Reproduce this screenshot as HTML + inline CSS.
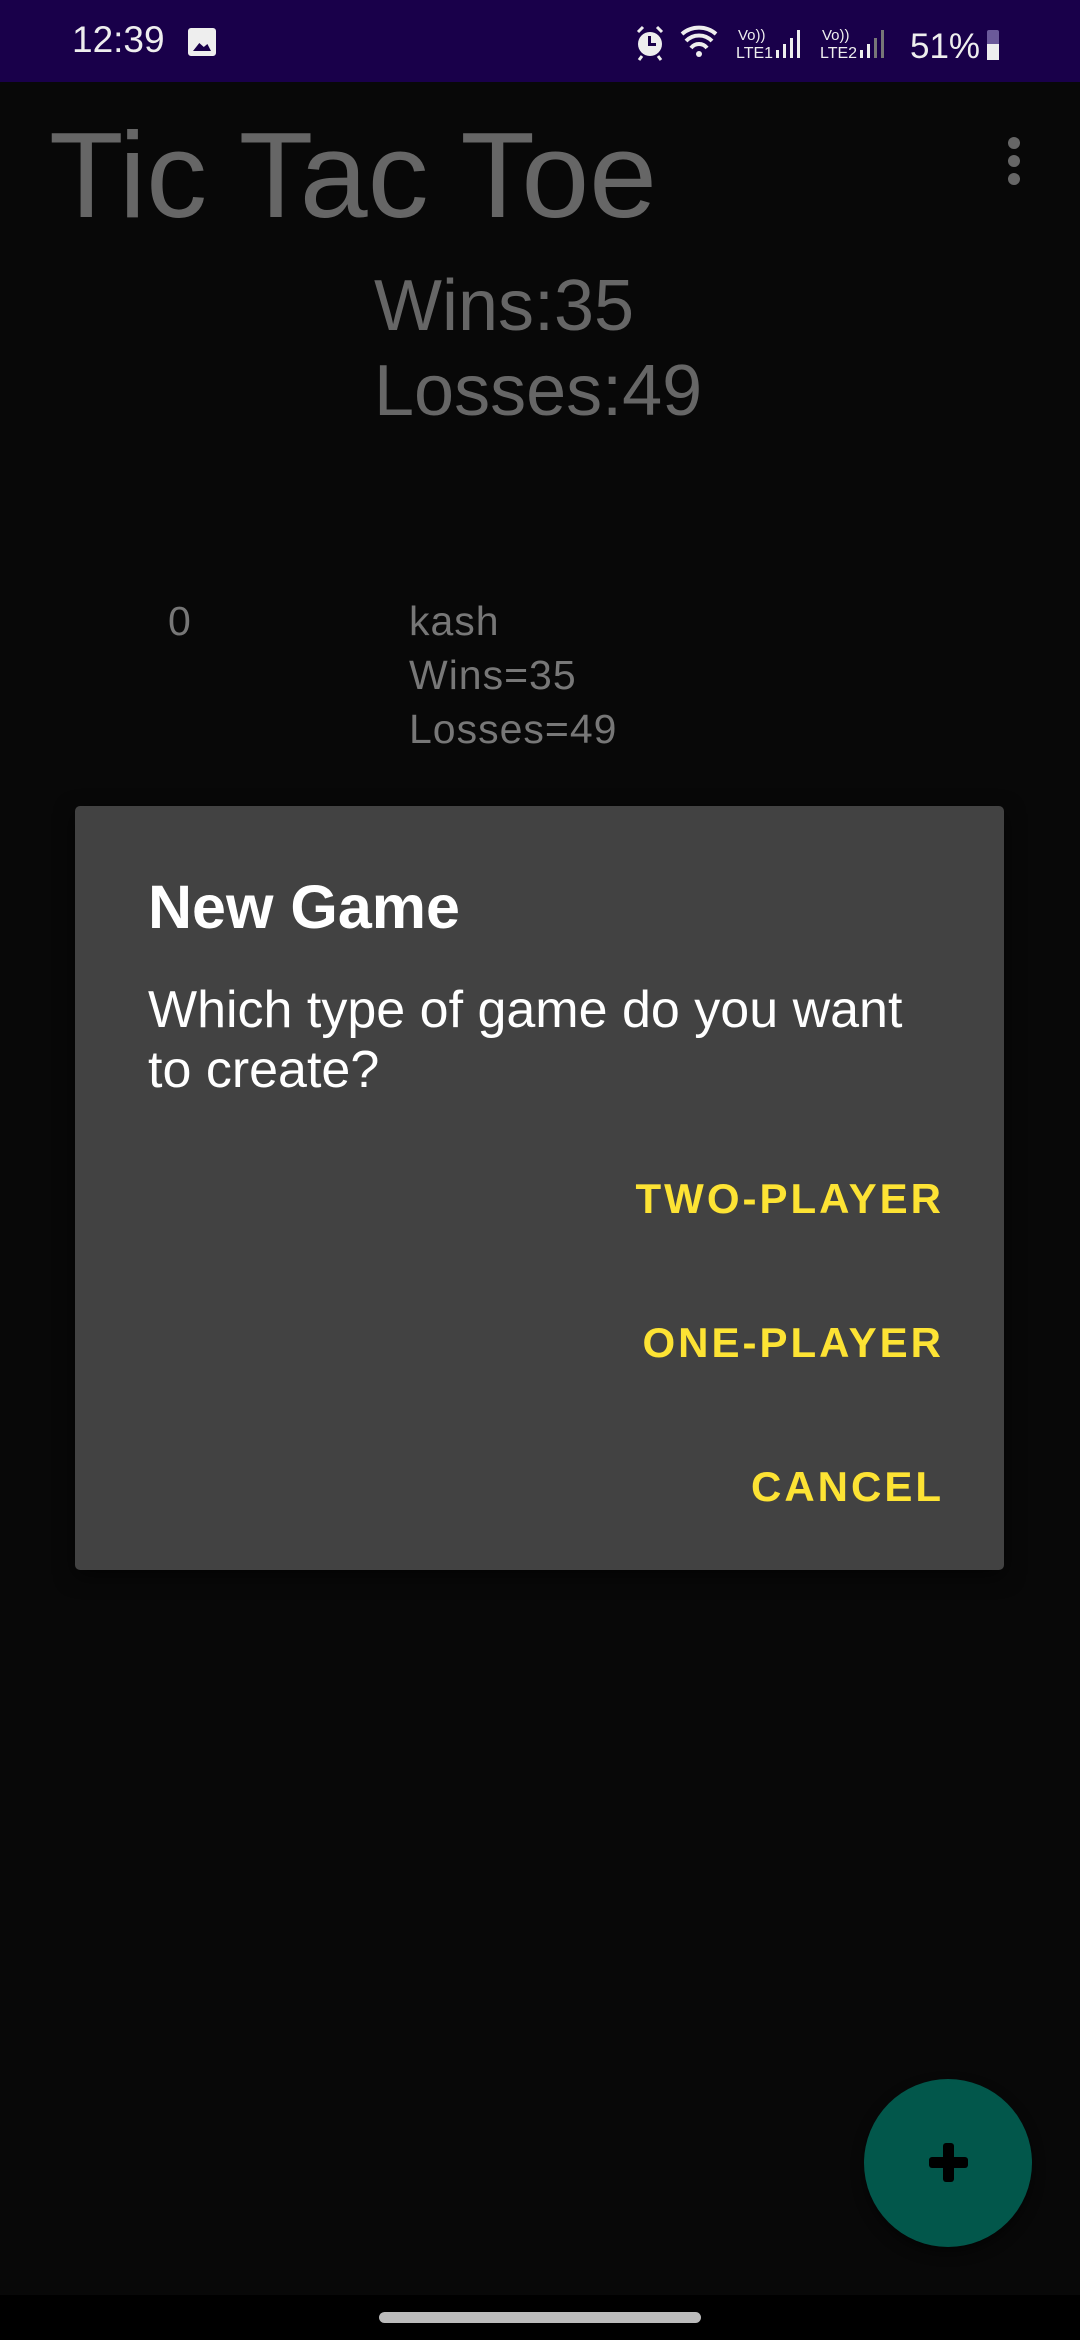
<!DOCTYPE html>
<html><head><meta charset="utf-8"><style>
*{margin:0;padding:0;box-sizing:border-box}
body{width:1080px;height:2340px;background:#080808;position:relative;overflow:hidden;font-family:"Liberation Sans",sans-serif}
.a{position:absolute;white-space:nowrap}
</style></head><body>
<div class="a" style="left:0;top:0;width:1080px;height:82px;background:#19004a"></div>
<div class="a" style="left:72px;top:18px;font-size:37px;color:#eee;line-height:44px">12:39</div>
<div class="a" style="left:188px;top:28px;width:28px;height:28px;border:3px solid #eee;border-radius:3px;background:#eee"><div style="position:absolute;left:2px;top:10px;width:18px;height:10px;background:#19004a;clip-path:polygon(0 100%,35% 20%,60% 60%,80% 30%,100% 100%)"></div></div>
<svg class="a" style="left:630px;top:20px" width="420" height="44" viewBox="0 0 420 44">
<circle cx="20" cy="24" r="12" fill="#eee"/><path d="M8 12l5-5M32 12l-5-5M12 36l-3 4M28 36l3 4" stroke="#eee" stroke-width="3"/><rect x="18" y="16" width="3" height="9" fill="#19004a"/><rect x="18" y="23" width="8" height="3" fill="#19004a"/>
<path d="M52 14a26 26 0 0 1 34 0M56 21a18 18 0 0 1 26 0M61 28a10 10 0 0 1 16 0" stroke="#eee" stroke-width="4" fill="none"/><circle cx="69" cy="34" r="3" fill="#eee"/>
<text x="108" y="20" font-size="15" fill="#eee" font-family="Liberation Sans">Vo))</text><text x="106" y="38" font-size="16" fill="#eee" font-family="Liberation Sans">LTE1</text>
<rect x="146" y="30" width="3" height="8" fill="#eee"/><rect x="153" y="24" width="3" height="14" fill="#eee"/><rect x="160" y="18" width="3" height="20" fill="#eee"/><rect x="167" y="10" width="3" height="28" fill="#eee"/>
<text x="192" y="20" font-size="15" fill="#eee" font-family="Liberation Sans">Vo))</text><text x="190" y="38" font-size="16" fill="#eee" font-family="Liberation Sans">LTE2</text>
<rect x="230" y="30" width="3" height="8" fill="#eee"/><rect x="237" y="24" width="3" height="14" fill="#eee"/><rect x="244" y="18" width="3" height="20" fill="#777"/><rect x="251" y="10" width="3" height="28" fill="#777"/>
<text x="280" y="38" font-size="35" fill="#eee" font-family="Liberation Sans">51%</text>
<rect x="357" y="10" width="12" height="30" rx="2" fill="#6b5a9a"/><rect x="357" y="24" width="12" height="16" fill="#eee"/>
</svg>
<div class="a" style="left:49px;top:110px;font-size:122px;color:#666;line-height:130px">Tic Tac Toe</div>
<div class="a" style="left:1008px;top:137px;width:12px;height:12px;border-radius:6px;background:#666;box-shadow:0 18px 0 #666,0 36px 0 #666"></div>
<div class="a" style="left:374px;top:264px;font-size:72px;color:#666;line-height:85px">Wins:35<br>Losses:49</div>
<div class="a" style="left:168px;top:594px;font-size:41px;color:#777;line-height:54px">0</div>
<div class="a" style="left:409px;top:594px;font-size:41px;color:#777;line-height:54px;letter-spacing:1px">kash<br>Wins=35<br>Losses=49</div>
<div class="a" style="left:75px;top:806px;width:929px;height:764px;background:#424242;border-radius:5px;box-shadow:0 6px 20px rgba(0,0,0,.6)"></div>
<div class="a" style="left:148px;top:872px;font-size:61px;font-weight:bold;color:#fff;line-height:70px">New Game</div>
<div class="a" style="left:148px;top:980px;font-size:52px;color:#fff;line-height:60px">Which type of game do you want<br>to create?</div>
<div class="a" style="right:136px;top:1174px;font-size:42px;font-weight:bold;color:#fde334;letter-spacing:3px;line-height:50px">TWO-PLAYER</div>
<div class="a" style="right:136px;top:1318px;font-size:42px;font-weight:bold;color:#fde334;letter-spacing:3px;line-height:50px">ONE-PLAYER</div>
<div class="a" style="right:136px;top:1462px;font-size:42px;font-weight:bold;color:#fde334;letter-spacing:3px;line-height:50px">CANCEL</div>
<div class="a" style="left:864px;top:2079px;width:168px;height:168px;border-radius:50%;background:#02574b;box-shadow:0 6px 12px rgba(0,0,0,.5)"></div>
<div class="a" style="left:929px;top:2157px;width:39px;height:11px;background:#000;border-radius:3px"></div>
<div class="a" style="left:943px;top:2143px;width:11px;height:39px;background:#000;border-radius:3px"></div>
<div class="a" style="left:0;top:2295px;width:1080px;height:45px;background:#000"></div>
<div class="a" style="left:379px;top:2312px;width:322px;height:11px;border-radius:6px;background:#bbb"></div>
</body></html>
